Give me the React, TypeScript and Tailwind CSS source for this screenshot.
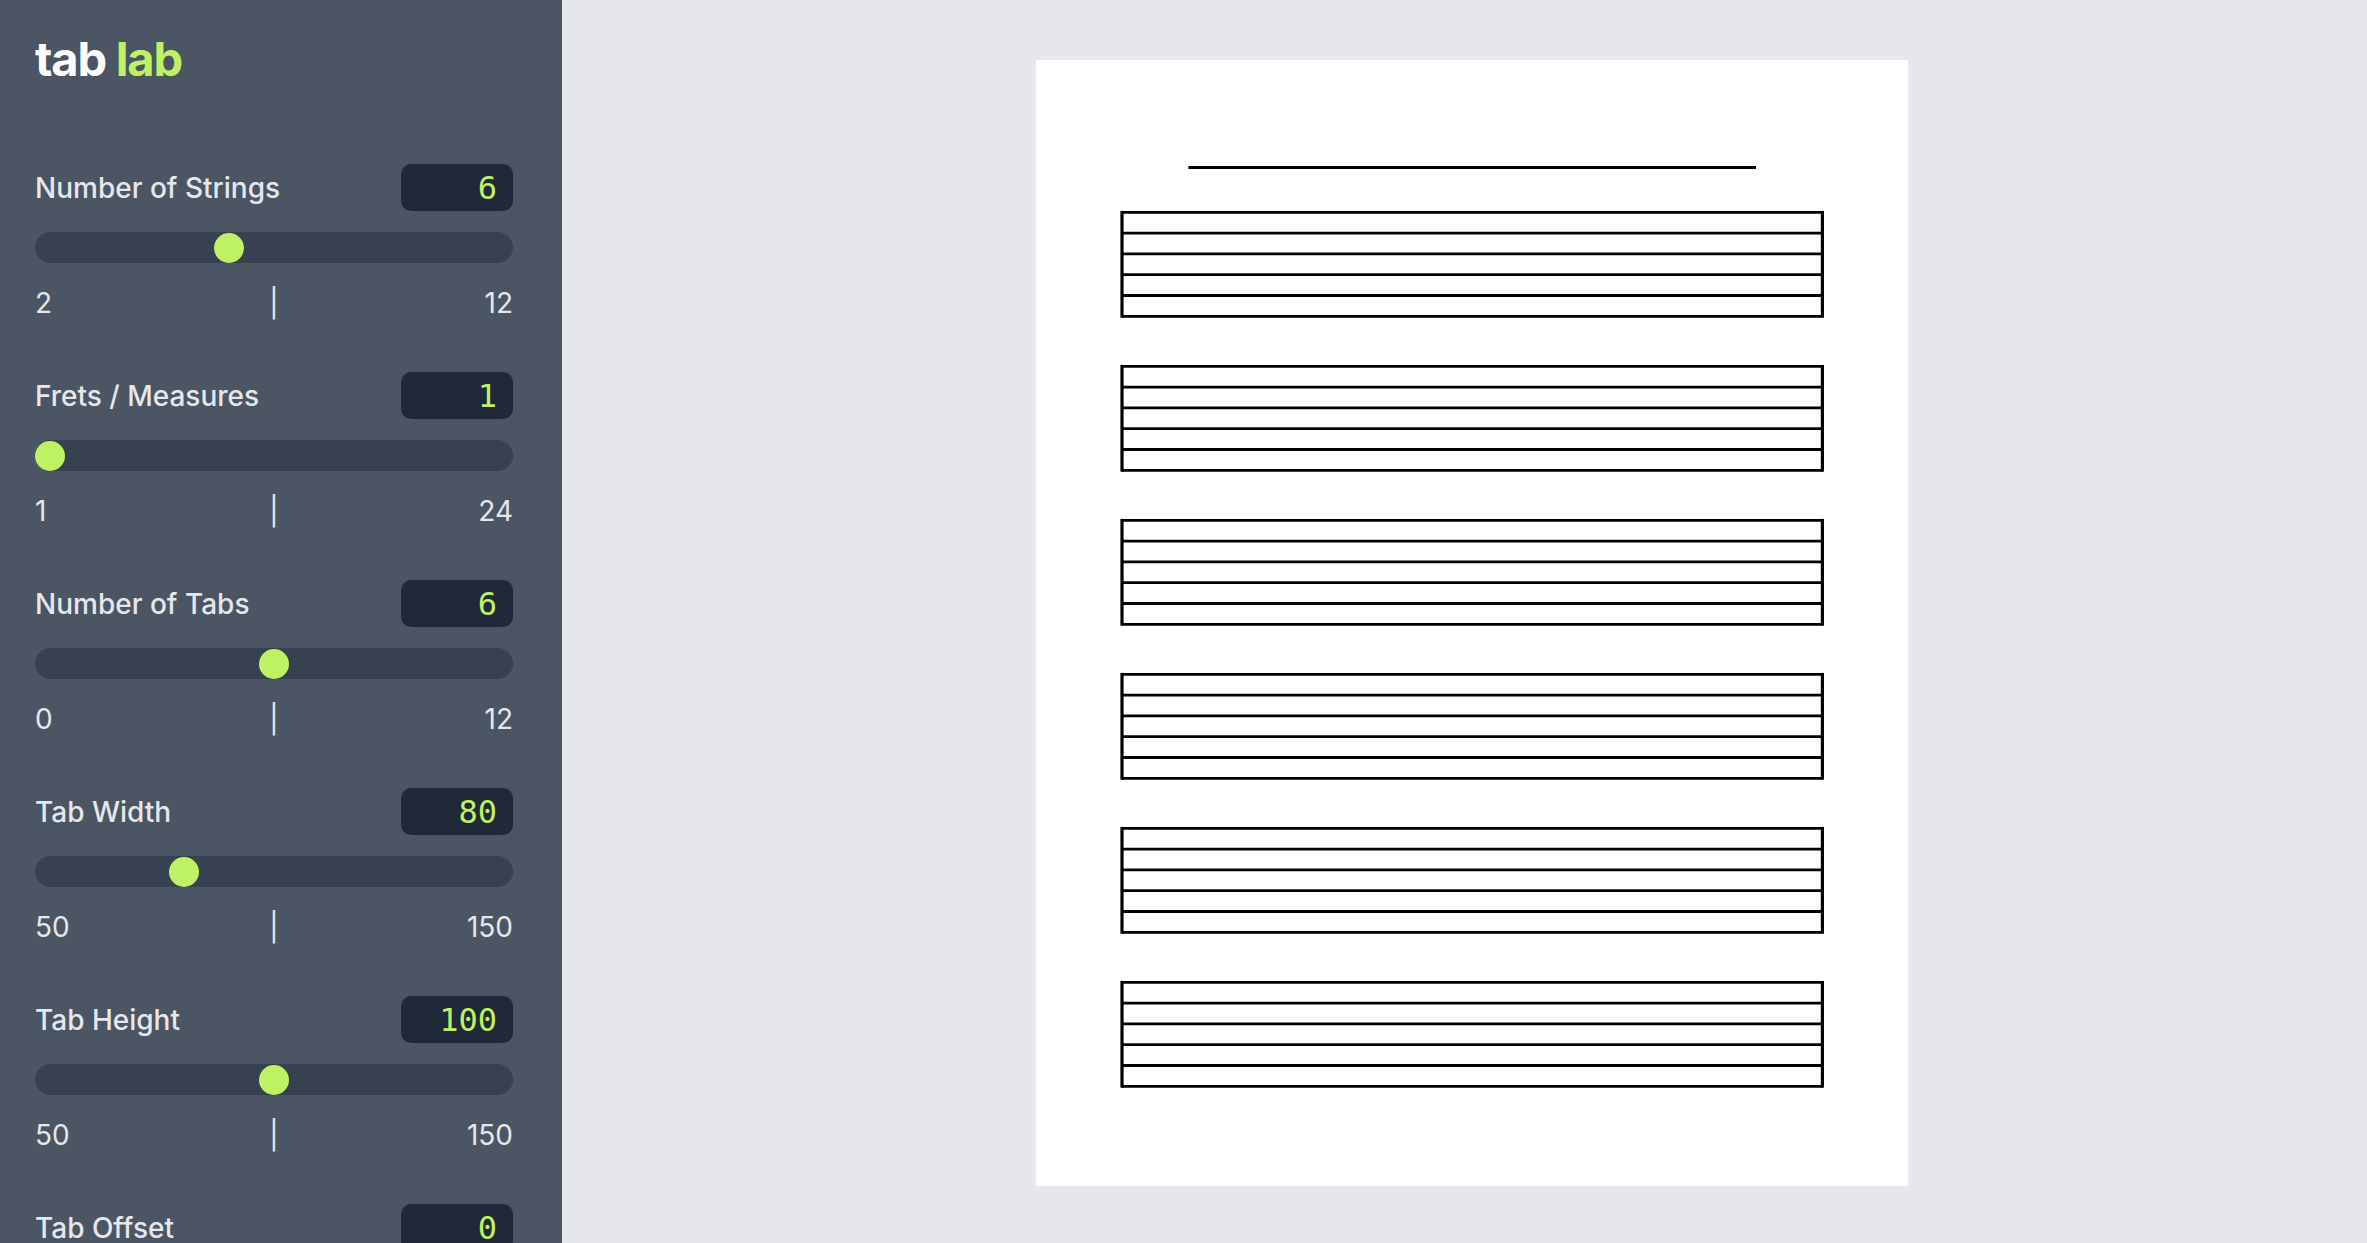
const LIME = "text-[#bef264]";

type Setting = {
  label: string;
  value: number;
  min: number;
  max: number;
};

const settings: Setting[] = [
  { label: "Number of Strings", value: 6, min: 2, max: 12 },
  { label: "Frets / Measures", value: 1, min: 1, max: 24 },
  { label: "Number of Tabs", value: 6, min: 0, max: 12 },
  { label: "Tab Width", value: 80, min: 50, max: 150 },
  { label: "Tab Height", value: 100, min: 50, max: 150 },
  { label: "Tab Offset", value: 0, min: 0, max: 50 },
];

const TRACK_W = 478;
const THUMB = 30;

const SliderRow = ({ label, value, min, max }: Setting) => {
  const frac = (value - min) / (max - min);
  return (
    <div className="flex flex-col">
      <div className="flex items-center justify-between h-[47px]">
        <span className="text-[28px] font-medium text-[#e5e7eb]">{label}</span>
        <div
          className={`w-[112px] h-[47px] rounded-[10px] bg-[#1f2937] flex items-center justify-end pr-4 font-['DejaVu_Sans_Mono',monospace] text-[32px] ${LIME}`}
        >
          {value}
        </div>
      </div>
      <div className="mt-[21px] relative h-[31px] rounded-full bg-[#374151]">
        <div
          className="absolute top-1/2 -translate-y-1/2 w-[30px] h-[30px] rounded-full bg-[#bef264]"
          style={{ left: frac * (TRACK_W - THUMB) }}
        />
      </div>
      <div className="mt-[23px] grid grid-cols-3 text-[28px] leading-[34px] text-[#e5e7eb]">
        <span className="text-left">{min}</span>
        <span className="text-center">|</span>
        <span className="text-right">{max}</span>
      </div>
    </div>
  );
};

const Paper = ({ tabs, strings }: { tabs: number; strings: number }) => {
  const staffTop = 152.3;
  const step = 154;
  const gap = 20.8;
  return (
    <div className="w-[872px] h-[1126px] bg-white shrink-0">
      <svg width="872" height="1126" viewBox="0 0 872 1126">
        <line x1="152.4" x2="720" y1="107.5" y2="107.5" stroke="#000" strokeWidth="2.8" />
        {Array.from({ length: tabs }).map((_, t) => {
          const top = staffTop + t * step;
          const bottom = top + gap * (strings - 1);
          return (
            <g key={t}>
              {Array.from({ length: strings }).map((_, s) => (
                <line
                  key={s}
                  x1="86"
                  x2="786.4"
                  y1={top + s * gap}
                  y2={top + s * gap}
                  stroke="#000"
                  strokeWidth="2.8"
                />
              ))}
              <line x1="86" x2="86" y1={top - 1.4} y2={bottom + 1.4} stroke="#000" strokeWidth="3.2" />
              <line x1="786.4" x2="786.4" y1={top - 1.4} y2={bottom + 1.4} stroke="#000" strokeWidth="3.2" />
            </g>
          );
        })}
      </svg>
    </div>
  );
};

const App = () => {
  return (
    <div className="flex w-full h-screen overflow-hidden font-[Inter,sans-serif]">
      <aside className="w-[562px] shrink-0 h-screen overflow-hidden bg-[#4b5563] pl-[35px] pr-[49px] pt-[35px]">
        <h1 className="text-[47px] font-bold leading-none tracking-tight text-white">
          tab <span className={LIME}>lab</span>
        </h1>
        <div className="mt-[82px] flex flex-col gap-[52px]">
          {settings.map((s) => (
            <SliderRow key={s.label} {...s} />
          ))}
        </div>
      </aside>

      <main className="flex-1 bg-[#e5e7eb] flex items-center justify-center pl-[14px] pt-[3px]">
        <Paper tabs={6} strings={6} />
      </main>
    </div>
  );
};

export default App;
